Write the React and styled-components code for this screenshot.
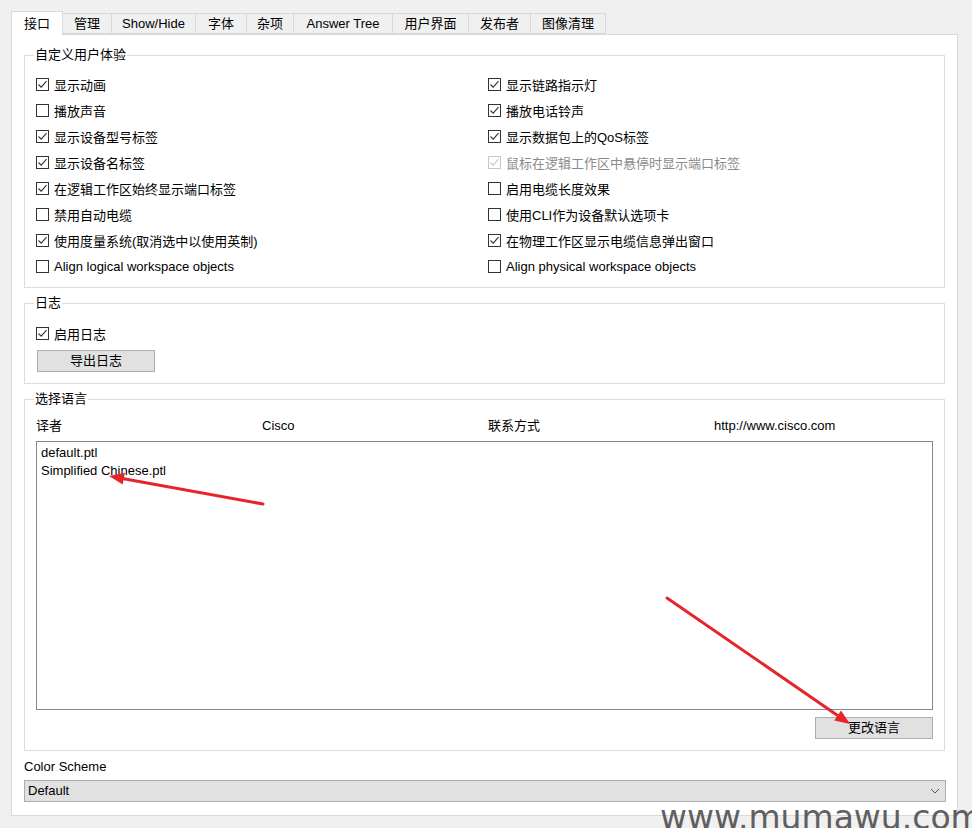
import React from "react"
import styled, { createGlobalStyle } from "styled-components"

const GlobalStyle = createGlobalStyle`
  html, body {
    margin: 0;
    padding: 0;
    background: #f0f0f0;
  }
  body {
    font-family: "Liberation Sans", "Noto Sans CJK SC", sans-serif;
    font-size: 13px;
    color: #000;
  }
`

const Page = styled.div`
  position: relative;
  width: 972px;
  height: 828px;
  box-sizing: border-box;
  padding: 11px 14px 0 11px;
  overflow: hidden;
`

const TabBar = styled.div`
  display: flex;
  align-items: flex-end;
  height: 23px;
  position: relative;
  z-index: 2;
`

const Tab = styled.div`
  box-sizing: border-box;
  width: ${(p) => p.$w}px;
  height: ${(p) => (p.$active ? 24 : 21)}px;
  margin-bottom: ${(p) => (p.$active ? -1 : 0)}px;
  margin-left: ${(p) => (p.$first ? 0 : -1)}px;
  border: 1px solid #d9d9d9;
  border-bottom: ${(p) => (p.$active ? "none" : "1px solid #d9d9d9")};
  background: ${(p) => (p.$active ? "#fff" : "#f0f0f0")};
  display: flex;
  align-items: center;
  justify-content: center;
  padding-top: ${(p) => (p.$active ? 0 : 1)}px;
  line-height: 16px;
  white-space: nowrap;
  position: relative;
  z-index: ${(p) => (p.$active ? 3 : 1)};
`

const Panel = styled.div`
  background: #fff;
  border: 1px solid #d9d9d9;
  padding: 12px 12px 13px 12px;
  display: flex;
  flex-direction: column;
`

const Group = styled.fieldset`
  margin: 0 0 7px 0;
  padding: ${(p) => p.$pad || "8px 11px 8px 11px"};
  border: 1px solid #dcdcdc;
  min-inline-size: 0;
`

const Legend = styled.legend`
  padding: 0 1px;
  margin-left: -2px;
  line-height: 16px;
`

const CheckGrid = styled.div`
  display: grid;
  grid-template-columns: 452px 1fr;
  grid-auto-rows: 26px;
`

const CheckRow = styled.label`
  display: flex;
  align-items: center;
  gap: 5px;
  height: ${(p) => p.$h || 26}px;
  color: ${(p) => (p.$disabled ? "#8a8a8a" : "#000")};
  white-space: nowrap;
`

const Box = styled.span`
  box-sizing: border-box;
  width: 13px;
  height: 13px;
  flex: none;
  border: 1px solid ${(p) => (p.$disabled ? "#c6c6c6" : "#333")};
  background: #fff;
  display: flex;
  align-items: center;
  justify-content: center;
`

const Button = styled.div`
  box-sizing: border-box;
  width: 118px;
  height: 22px;
  margin-top: ${(p) => p.$mt || 0}px;
  margin-left: ${(p) => p.$ml || 0}px;
  background: #e1e1e1;
  border: 1px solid #adadad;
  display: flex;
  align-items: center;
  justify-content: center;
  line-height: 16px;
`

const HeaderRow = styled.div`
  display: grid;
  grid-template-columns: repeat(4, 226px);
  line-height: 18px;
  margin-bottom: 6px;
`

const ListBox = styled.div`
  box-sizing: border-box;
  height: 269px;
  border: 1px solid #828790;
  background: #fff;
  padding: 2px 4px;
  line-height: 18px;
`

const ButtonRow = styled.div`
  display: flex;
  justify-content: flex-end;
  margin-top: 7px;
`

const SchemeLabel = styled.div`
  line-height: 16px;
  margin-top: 1px;
`

const Select = styled.div`
  box-sizing: border-box;
  height: 22px;
  margin-top: 5px;
  margin-right: -1px;
  background: #e1e1e1;
  border: 1px solid #adadad;
  display: flex;
  align-items: center;
  justify-content: space-between;
  padding: 0 5px 0 3px;
  line-height: 16px;
`

const Watermark = styled.div`
  position: absolute;
  left: 660px;
  top: 798px;
  font-family: "DejaVu Sans", sans-serif;
  font-size: 33px;
  line-height: 40px;
  color: #505050;
  opacity: 0.9;
  white-space: nowrap;
  pointer-events: none;
`

const Overlay = styled.svg`
  position: absolute;
  left: 0;
  top: 0;
  pointer-events: none;
`

const tabs = [
  ["接口", 52],
  ["管理", 50],
  ["Show/Hide", 85],
  ["字体", 52],
  ["杂项", 48],
  ["Answer Tree", 100],
  ["用户界面", 77],
  ["发布者", 63],
  ["图像清理", 76],
]

const options = [
  ["显示动画", true],
  ["显示链路指示灯", true],
  ["播放声音", false],
  ["播放电话铃声", true],
  ["显示设备型号标签", true],
  ["显示数据包上的QoS标签", true],
  ["显示设备名标签", true],
  ["鼠标在逻辑工作区中悬停时显示端口标签", true, true],
  ["在逻辑工作区始终显示端口标签", true],
  ["启用电缆长度效果", false],
  ["禁用自动电缆", false],
  ["使用CLI作为设备默认选项卡", false],
  ["使用度量系统(取消选中以使用英制)", true],
  ["在物理工作区显示电缆信息弹出窗口", true],
  ["Align logical workspace objects", false],
  ["Align physical workspace objects", false],
]

function Check({ label, checked, disabled, h }) {
  return (
    <CheckRow $disabled={disabled} $h={h}>
      <Box $disabled={disabled}>
        {checked ? (
          <svg width="11" height="11" viewBox="0 0 11 11">
            <polyline
              points="1.5,5.5 4.2,8.2 9.5,2.2"
              fill="none"
              stroke={disabled ? "#c6c6c6" : "#333"}
              strokeWidth="1.1"
            />
          </svg>
        ) : null}
      </Box>
      {label}
    </CheckRow>
  )
}

function Arrow({ x1, y1, x2, y2 }) {
  const a = Math.atan2(y2 - y1, x2 - x1)
  const len = 15
  const w = 6
  const bx = x2 - len * Math.cos(a)
  const by = y2 - len * Math.sin(a)
  const px = -Math.sin(a) * w
  const py = Math.cos(a) * w
  return (
    <g>
      <line x1={x1} y1={y1} x2={bx} y2={by} stroke="#e8242b" strokeWidth="3" strokeLinecap="round" />
      <polygon points={`${x2},${y2} ${bx + px},${by + py} ${bx - px},${by - py}`} fill="#e8242b" />
    </g>
  )
}

export default function App() {
  return (
    <Page>
      <GlobalStyle />
      <TabBar>
        {tabs.map(([t, w], i) => (
          <Tab key={t} $w={w} $active={i === 0} $first={i === 0}>
            {t}
          </Tab>
        ))}
      </TabBar>
      <Panel>
        <Group>
          <Legend>自定义用户体验</Legend>
          <CheckGrid>
            {options.map(([t, c, d]) => (
              <Check key={t} label={t} checked={c} disabled={d} />
            ))}
          </CheckGrid>
        </Group>

        <Group $pad="9px 11px 11px 11px">
          <Legend>日志</Legend>
          <Check label="启用日志" checked h={26} />
          <Button $mt={4} $ml={1}>导出日志</Button>
        </Group>

        <Group $pad="10px 11px 11px 11px">
          <Legend>选择语言</Legend>
          <HeaderRow>
            <span>译者</span>
            <span>Cisco</span>
            <span>联系方式</span>
            <span>http://www.cisco.com</span>
          </HeaderRow>
          <ListBox>
            <div>default.ptl</div>
            <div>Simplified Chinese.ptl</div>
          </ListBox>
          <ButtonRow>
            <Button>更改语言</Button>
          </ButtonRow>
        </Group>

        <SchemeLabel>Color Scheme</SchemeLabel>
        <Select>
          <span>Default</span>
          <svg width="10" height="6" viewBox="0 0 10 6">
            <polyline points="1,1 5,5 9,1" fill="none" stroke="#555" strokeWidth="1" />
          </svg>
        </Select>
      </Panel>

      <Overlay width="972" height="828">
        <Arrow x1={263} y1={504} x2={109} y2={476} />
        <Arrow x1={667} y1={598} x2={850} y2={724} />
      </Overlay>
      <Watermark>www.mumawu.com</Watermark>
    </Page>
  )
}
